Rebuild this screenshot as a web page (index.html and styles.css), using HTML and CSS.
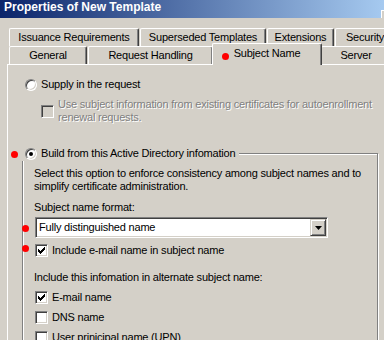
FILE: index.html
```html
<!DOCTYPE html>
<html>
<head>
  <title>Properties of New Template</title>
  <link rel="stylesheet" href="styles.css">
</head>
<body>
  <div class="titlebar">
    <span class="title">Properties of New Template</span>
    <span class="caption-btn"></span>
  </div>

  <div class="tabs">
    <div class="tab-row">
      <div class="tab tab-issuance">Issuance Requirements</div>
      <div class="tab tab-superseded">Superseded Templates</div>
      <div class="tab tab-extensions">Extensions</div>
      <div class="tab tab-security">Security</div>
    </div>
    <div class="tab-row">
      <div class="tab tab-general">General</div>
      <div class="tab tab-request">Request Handling</div>
      <div class="tab tab-subject selected">Subject Name</div>
      <div class="tab tab-server">Server</div>
    </div>
  </div>

  <div class="panel">
    <label class="option supply"><span class="radio"></span>Supply in the request</label>

    <label class="check-row renewal disabled">
      <span class="checkbox"></span>
      <span>Use subject information from existing certificates for autoenrollment<br>renewal requests.</span>
    </label>

    <div class="group">
      <label class="group-caption"><span class="radio checked"></span>Build from this Active Directory infomation</label>
      <div class="group-body">
        <p class="note">Select this option to enforce consistency among subject names and to<br>simplify certificate administration.</p>

        <div class="field-label">Subject name format:</div>
        <div class="combo">
          <span class="combo-text">Fully distinguished name</span>
          <span class="combo-btn">
            <svg width="7" height="4" viewBox="0 0 7 4"><path d="M0 0h7L3.5 4z" fill="#000"/></svg>
          </span>
        </div>

        <label class="check-row include-email">
          <span class="checkbox"><svg class="tick" viewBox="0 0 11 11"><path d="M2 4h1v3H2zM3 5h1v3H3zM4 6h1v3H4zM5 5h1v3H5zM6 4h1v3H6zM7 3h1v3H7zM8 2h1v3H8z" fill="#000"/></svg></span>
          Include e-mail name in subject name
        </label>

        <div class="field-label alt-label">Include this infomation in alternate subject name:</div>

        <label class="check-row alt-item first">
          <span class="checkbox"><svg class="tick" viewBox="0 0 11 11"><path d="M2 4h1v3H2zM3 5h1v3H3zM4 6h1v3H4zM5 5h1v3H5zM6 4h1v3H6zM7 3h1v3H7zM8 2h1v3H8z" fill="#000"/></svg></span>
          E-mail name
        </label>
        <label class="check-row alt-item">
          <span class="checkbox"></span>
          DNS name
        </label>
        <label class="check-row alt-item">
          <span class="checkbox"></span>
          User prinicipal name (UPN)
        </label>
      </div>
    </div>
  </div>

  <!-- red annotation dots -->
  <span class="mark mark-tab"></span>
  <span class="mark mark-build"></span>
  <span class="mark mark-format"></span>
  <span class="mark mark-email"></span>
</body>
</html>
```

FILE: styles.css
```css
* {
  box-sizing: border-box;
}
body {
  position: relative;
  width: 384px;
  height: 340px;
  margin: 0;
  overflow: hidden;
  background-color: #d4d0c8;
  color: #000;
  font-family: "Liberation Sans", Arial, sans-serif;
  font-size: 11px;
  line-height: 13px;
  letter-spacing: -0.2px;
}
p {
  margin: 0;
}

/* title bar */
.titlebar {
  position: relative;
  height: 18px;
  padding: 1px 0 0 4px;
  background: linear-gradient(to right, #0a246a, #a6caf0);
}
.title {
  color: #fff;
  font-size: 12px;
  font-weight: bold;
  letter-spacing: 0;
}
.caption-btn {
  position: absolute;
  left: 381px;
  top: 10px;
  width: 16px;
  height: 8px;
  background-color: #d4d0c8;
  border-top: 1px solid #fff;
  border-left: 1px solid #fff;
}

/* tabs */
.tabs {
  padding: 10px 0 0 9px;
}
.tab-row {
  display: flex;
  gap: 1px;
  height: 18px;
}
.tab {
  flex: none;
  height: 18px;
  border: 1px solid;
  border-color: #fff #404040 transparent #fff;
  border-bottom: 0;
  border-radius: 2px 2px 0 0;
  box-shadow: inset -1px 0 0 #808080;
  background-color: #d4d0c8;
  text-align: center;
  line-height: 17px;
  white-space: nowrap;
}
.tab-issuance { width: 130px; }
.tab-superseded { width: 126px; }
.tab-extensions { width: 67px; }
.tab-security { width: 60px; }
.tab-general { width: 78px; }
.tab-request { width: 125px; }
.tab-server { width: 70px; }
.tab-subject {
  width: 110px;
}
.tab.selected {
  z-index: 1;
  height: 22px;
  margin: -3px -2px 0;
  padding-top: 1px;
}

/* page */
.panel {
  width: 420px;
  height: 300px;
  margin-left: 7px;
  padding: 13px 0 0 14px;
  border-top: 1px solid #fff;
  border-left: 1px solid #fff;
}
.option {
  display: flex;
  align-items: center;
  height: 13px;
  margin-left: 3px;
  white-space: nowrap;
}
.radio {
  flex: none;
  display: flex;
  align-items: center;
  justify-content: center;
  width: 12px;
  height: 12px;
  margin-right: 4px;
  border: 1px solid;
  border-color: #808080 #fff #fff #808080;
  border-radius: 50%;
  box-shadow: inset 1px 1px 0 #404040, inset -1px -1px 0 #d4d0c8;
  background-color: #fff;
}
.radio.checked::after {
  content: "";
  width: 4px;
  height: 4px;
  border-radius: 50%;
  background-color: #000;
}
.check-row {
  display: flex;
  align-items: center;
  white-space: nowrap;
}
.checkbox {
  flex: none;
  width: 13px;
  height: 13px;
  margin-right: 4px;
  border: 1px solid;
  border-color: #808080 #fff #fff #808080;
  box-shadow: inset 1px 1px 0 #404040, inset -1px -1px 0 #d4d0c8;
  background-color: #fff;
}
.tick {
  display: block;
  width: 11px;
  height: 11px;
}
.renewal {
  margin: 7px 0 0 19px;
}
.disabled {
  color: #808080;
  text-shadow: 1px 1px 0 #fff;
}
.disabled .checkbox {
  background-color: #d4d0c8;
}

/* group box */
.group {
  width: 356px;
  height: 200px;
  margin-top: 29px;
  border: 1px solid #808080;
  box-shadow: inset 1px 1px 0 #fff, 1px 1px 0 #fff;
}
.group-caption {
  display: flex;
  align-items: center;
  width: fit-content;
  height: 15px;
  margin: -8px 0 0 -3px;
  padding: 0 4px 0 5px;
  background-color: #d4d0c8;
  white-space: nowrap;
}
.group-body {
  padding-left: 11px;
}
.note {
  margin-top: 6px;
  white-space: nowrap;
}
.field-label {
  margin-top: 8px;
  white-space: nowrap;
}
.alt-label {
  margin-top: 14px;
}
.combo {
  display: flex;
  align-items: center;
  width: 293px;
  height: 21px;
  margin: 3px 0 0 1px;
  padding: 1px;
  border: 1px solid;
  border-color: #808080 #fff #fff #808080;
  box-shadow: inset 1px 1px 0 #404040, inset -1px -1px 0 #d4d0c8;
  background-color: #fff;
}
.combo-text {
  flex: 1;
  padding-left: 2px;
}
.combo-btn {
  flex: none;
  display: flex;
  align-items: center;
  justify-content: center;
  width: 16px;
  height: 17px;
  border: 1px solid;
  border-color: #d4d0c8 #404040 #404040 #d4d0c8;
  box-shadow: inset 1px 1px 0 #fff, inset -1px -1px 0 #808080;
  background-color: #d4d0c8;
}
.combo-btn svg {
  display: block;
}
.include-email {
  margin: 6px 0 0 1px;
}
.alt-item {
  margin: 7px 0 0 1px;
}

/* annotation dots */
.mark {
  position: absolute;
  z-index: 2;
  width: 7px;
  height: 7px;
  border-radius: 50%;
  background-color: #f00;
}
.mark-tab { left: 222px; top: 53px; }
.mark-build { left: 11px; top: 151px; }
.mark-format { left: 22px; top: 225px; }
.mark-email { left: 22px; top: 245px; }
```
